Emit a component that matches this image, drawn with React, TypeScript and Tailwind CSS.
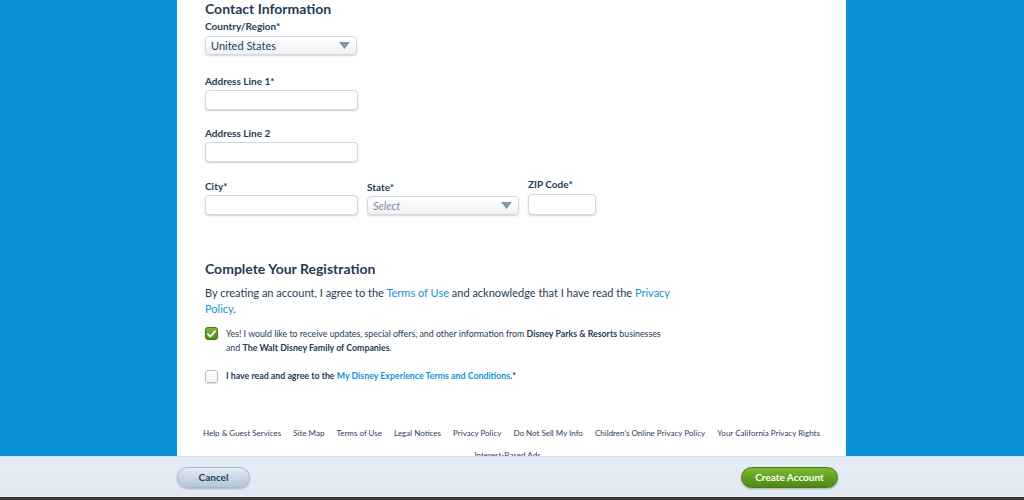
import React from "react";

const font = { fontFamily: "Lato, 'Open Sans', sans-serif" };

function Label({ children }: { children: React.ReactNode }) {
  return (
    <div className="text-[10px] leading-[12px] font-bold text-[#253b56]">{children}</div>
  );
}

function Input({ w }: { w: string }) {
  return (
    <div
      className={`${w} h-[20px] rounded-[4px] border border-[#d3d9df] bg-white shadow-[0_1px_2px_rgba(0,0,0,0.18)]`}
    />
  );
}

function Select({ text, placeholder, w }: { text: string; placeholder?: boolean; w: string }) {
  return (
    <div
      className={`${w} h-[19px] rounded-[4px] border border-[#d3d9df] bg-gradient-to-b from-white to-[#eef2f6] shadow-[0_1px_2px_rgba(0,0,0,0.18)] flex items-center justify-between pl-[5px] pr-[6px]`}
    >
      <span
        className={`text-[11px] leading-[13px] ${placeholder ? "italic text-[#7d8b99]" : "text-[#253b56]"}`}
      >
        {text}
      </span>
      <svg width="11" height="7" viewBox="0 0 11 7">
        <polygon points="0,0 11,0 5.5,7" fill="#8796a6" />
      </svg>
    </div>
  );
}

export default function App() {
  const links = [
    "Help & Guest Services",
    "Site Map",
    "Terms of Use",
    "Legal Notices",
    "Privacy Policy",
    "Do Not Sell My Info",
    "Children's Online Privacy Policy",
    "Your California Privacy Rights",
  ];
  return (
    <div className="w-[1024px] h-[500px] overflow-hidden flex flex-col bg-[#0b93d9]" style={font}>
      <div className="h-[456px] flex overflow-hidden">
        <div className="w-[177px] shrink-0" />
        <div className="w-[669px] shrink-0 bg-white flex flex-col">
          <div className="pl-[28px] flex flex-col">
            <div className="text-[14px] leading-[18px] font-bold text-[#253b56]">Contact Information</div>
            <div className="mt-[2px]"><Label>Country/Region*</Label></div>
            <div className="mt-[4px]"><Select text="United States" w="w-[152px]" /></div>
            <div className="mt-[20px]"><Label>Address Line 1*</Label></div>
            <div className="mt-[3px]"><Input w="w-[153px]" /></div>
            <div className="mt-[17px]"><Label>Address Line 2</Label></div>
            <div className="mt-[3px]"><Input w="w-[153px]" /></div>
            <div className="mt-[16px] flex items-end gap-[9px]">
              <div className="flex flex-col gap-[3px]">
                <Label>City*</Label>
                <Input w="w-[153px]" />
              </div>
              <div className="flex flex-col gap-[3px]">
                <Label>State*</Label>
                <Select text="Select" placeholder w="w-[152px]" />
              </div>
              <div className="flex flex-col gap-[4px]">
                <Label>ZIP Code*</Label>
                <div className="w-[68px] h-[21px] rounded-[4px] border border-[#d3d9df] bg-white shadow-[0_1px_2px_rgba(0,0,0,0.18)]" />
              </div>
            </div>
          </div>
          <div className="mt-[26px] h-px bg-[#dde2e7] mr-[10px]" />
          <div className="h-[2px] bg-gradient-to-b from-[#f0f2f5] to-white mr-[10px]" />
          <div className="pl-[28px] flex flex-col">
            <div className="mt-[20px] text-[14px] leading-[16px] font-bold text-[#253b56]">
              Complete Your Registration
            </div>
            <p className="mt-[8px] w-[470px] text-[11px] leading-[16px] text-[#253b56]">
              By creating an account, I agree to the <span className="text-[#1592d8]">Terms of Use</span> and
              acknowledge that I have read the <span className="text-[#1592d8]">Privacy Policy</span>.
            </p>
            <div className="mt-[10px] flex items-start gap-[8px]">
              <div className="w-[13px] h-[13px] mt-[0px] shrink-0 rounded-[3px] border border-[#3f7a12] bg-gradient-to-b from-[#78b834] to-[#4c8d18] flex items-center justify-center shadow-[0_0_1px_rgba(0,0,0,0.4)]">
                <svg width="9" height="8" viewBox="0 0 9 8">
                  <path d="M1 4.2 L3.4 6.5 L8 1.2" stroke="white" strokeWidth="1.8" fill="none" strokeLinecap="round" strokeLinejoin="round" />
                </svg>
              </div>
              <div className="w-[450px] text-[8.8px] leading-[14px] text-[#253b56]">
                Yes! I would like to receive updates, special offers, and other information from{" "}
                <b>Disney Parks &amp; Resorts</b> businesses and <b>The Walt Disney Family of Companies</b>.
              </div>
            </div>
            <div className="mt-[14px] flex items-center gap-[8px]">
              <div className="w-[13px] h-[13px] shrink-0 rounded-[3px] border border-[#b9c1c9] bg-gradient-to-b from-white to-[#eef1f4] shadow-[0_1px_1px_rgba(0,0,0,0.15)]" />
              <div className="text-[8.8px] leading-[14px] font-bold text-[#253b56]">
                I have read and agree to the{" "}
                <span className="text-[#1592d8]">My Disney Experience Terms and Conditions</span>.*
              </div>
            </div>
          </div>
          <div className="mt-[40px] h-px bg-[#dde2e7] mr-[8px]" />
          <div className="mt-[4px] pl-[26px] w-[643px] flex justify-between text-[8px] leading-[12px] text-[#2c405a]">
            {links.map((l) => (
              <span key={l}>{l}</span>
            ))}
          </div>
          <div className="mt-[10px] text-center text-[8px] leading-[12px] text-[#2c405a] pr-[8px]">
            Interest-Based Ads
          </div>
        </div>
        <div className="flex-1" />
      </div>
      <div className="h-[41px] bg-gradient-to-b from-[#e6edf7] to-[#e1e8f1] border-t border-[#d5dde7] flex items-center justify-between pl-[177px] pr-[186px]">
        <button className="w-[73px] h-[21px] rounded-full bg-gradient-to-b from-[#e3ebf5] to-[#b3c5da] border border-[#a9b9cc] shadow-[0_1px_2px_rgba(0,0,0,0.25)] text-[10px] font-bold text-[#2b3d55]">
          Cancel
        </button>
        <button className="w-[97px] h-[21px] rounded-full bg-gradient-to-b from-[#7cb832] to-[#4b8a12] border border-[#467d14] shadow-[0_1px_2px_rgba(0,0,0,0.3)] text-[10px] font-bold text-white">
          Create Account
        </button>
      </div>
      <div className="flex-1 bg-[#3a3a3a]" />
    </div>
  );
}
